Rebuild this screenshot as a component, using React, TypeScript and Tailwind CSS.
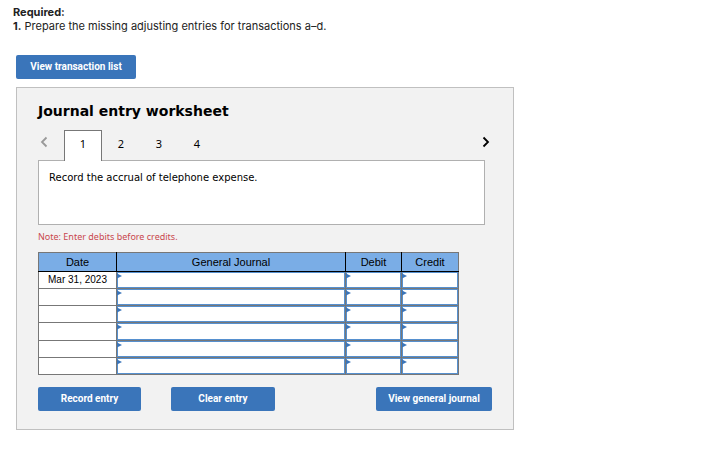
import { useState } from "react";

const TABS = [
  { id: 1, text: "Record the accrual of telephone expense." },
  { id: 2, text: "" },
  { id: 3, text: "" },
  { id: 4, text: "" },
];

const DATES = ["Mar 31, 2023", "", "", "", "", ""];

const buttonClass =
  "h-6 rounded-[2px] bg-[#3a75ba] text-center font-['Roboto',sans-serif] text-[10px] leading-6 font-bold text-white";

const Chevron = ({ points }: { points: string }) => (
  <svg viewBox="0 0 8 12" className="h-3 w-2" fill="none" stroke="currentColor" strokeWidth="1.8">
    <polyline points={points} />
  </svg>
);

const EntryCell = ({ label }: { label: string }) => (
  <td className="relative border border-[#777] p-0">
    <input
      type="text"
      aria-label={label}
      className="block h-full w-full border border-[#5690cf] bg-white px-2 text-[11px] outline-none"
    />
    {/* Marker for editable cells */}
    <svg viewBox="0 0 5 6" className="absolute top-px left-0 h-[6px] w-[5px] fill-[#3a75ba]">
      <path d="M0 0.5L5 3L0 5.5Z" />
    </svg>
  </td>
);

export default function App() {
  const [active, setActive] = useState(0);

  return (
    <main className="bg-white pt-[5px] pr-4 pb-10 pl-4 text-black">
      <div className="-ml-[3px] font-['Inter',sans-serif] text-[11px] leading-[14px] text-[#222]">
        <h1 className="font-bold">Required:</h1>
        <p>
          <b>1.</b> Prepare the missing adjusting entries for transactions a–d.
        </p>
      </div>

      <button className={`${buttonClass} mt-[22px] block w-[120px]`}>View transaction list</button>

      <section className="mt-2 max-w-[498px] border border-[#c0c0c0] bg-[#f2f2f2] px-[21px] pt-[13px] pb-[18px]">
        <h2 className="font-['DejaVu_Sans',sans-serif] text-[14px] leading-5 font-bold">
          Journal entry worksheet
        </h2>

        <div className="mt-[9px] flex h-[30px]">
          <button
            aria-label="Previous"
            className="flex h-6 w-[26px] items-center pl-[2px] text-[#999]"
            onClick={() => setActive(Math.max(0, active - 1))}
          >
            <Chevron points="6.5,1.5 2,6 6.5,10.5" />
          </button>
          {TABS.map((tab, i) => (
            <button
              key={tab.id}
              onClick={() => setActive(i)}
              className={`w-[38px] border-x border-t pb-1 font-['Noto_Sans',sans-serif] text-[11px] leading-4 ${
                i === active
                  ? "relative z-10 h-[31px] border-[#777] bg-white"
                  : "h-[31px] border-transparent"
              }`}
            >
              {tab.id}
            </button>
          ))}
          <button
            aria-label="Next"
            className="ml-auto flex h-6 w-[10px] items-center text-black"
            onClick={() => setActive(Math.min(TABS.length - 1, active + 1))}
          >
            <Chevron points="1.5,1.5 6,6 1.5,10.5" />
          </button>
        </div>

        <p className="mr-[7px] h-[65px] border border-[#b0b0b0] bg-white px-[10px] py-[9px] font-['DejaVu_Sans',sans-serif] text-[10px] leading-4">
          {TABS[active].text}
        </p>

        <p className="mt-[6px] font-['Noto_Sans',sans-serif] text-[9px] leading-3 text-[#c9484e]">
          Note: Enter debits before credits.
        </p>

        <div className="mt-[9px] mr-[33px]">
          <table className="h-[123px] w-full table-fixed border-collapse bg-white font-['Liberation_Sans',sans-serif] text-[10px] leading-3">
            <colgroup>
              <col className="w-[78px]" />
              <col />
              <col className="w-[56px]" />
              <col className="w-[57px]" />
            </colgroup>
            <thead>
              <tr className="h-[19px] bg-[#7aade6] text-[11px]">
                <th className="border border-[#777] border-r-black border-b-black p-0 font-normal">Date</th>
                <th className="border border-[#777] border-r-black border-b-black p-0 font-normal">General Journal</th>
                <th className="border border-[#777] border-r-black border-b-black p-0 font-normal">Debit</th>
                <th className="border border-[#777] border-b-black p-0 font-normal">Credit</th>
              </tr>
            </thead>
            <tbody>
              {DATES.map((date, i) => (
                <tr key={i} className="h-[17px]">
                  <td className="border border-[#777] p-0 text-center">{date}</td>
                  <EntryCell label={`General journal, line ${i + 1}`} />
                  <EntryCell label={`Debit, line ${i + 1}`} />
                  <EntryCell label={`Credit, line ${i + 1}`} />
                </tr>
              ))}
            </tbody>
          </table>
        </div>

        <div className="mt-3 flex">
          <button className={`${buttonClass} w-[103px]`}>Record entry</button>
          <button className={`${buttonClass} ml-[30px] w-[104px]`}>Clear entry</button>
          <button className={`${buttonClass} ml-auto w-[116px]`}>View general journal</button>
        </div>
      </section>
    </main>
  );
}
